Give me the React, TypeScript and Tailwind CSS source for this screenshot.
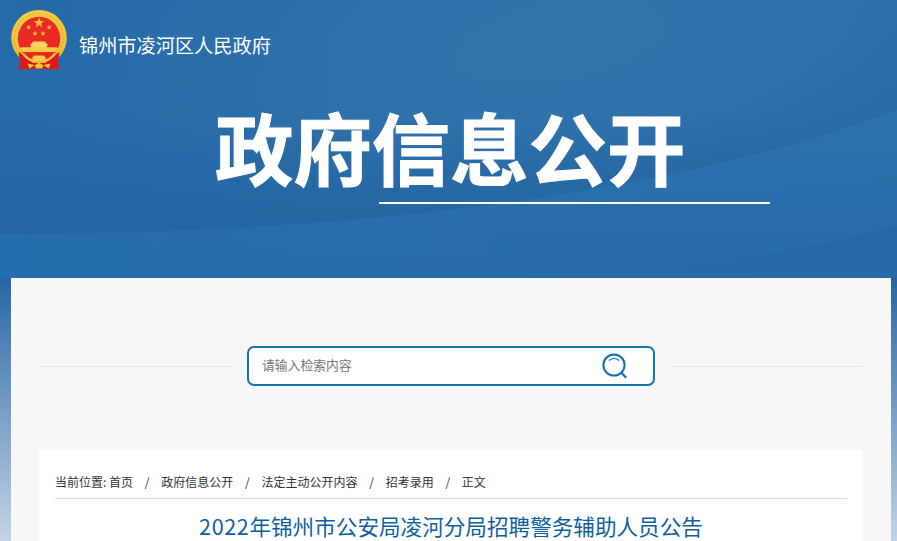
import React from 'react';

const crumbs = ['政府信息公开', '法定主动公开内容', '招考录用', '正文'];

const Emblem: React.FC<{ className?: string }> = ({ className }) => (
  <svg xmlns="http://www.w3.org/2000/svg" viewBox="0 0 56 60" className={className}>
    <defs>
      <linearGradient id="gold" x1="0" y1="0" x2="0" y2="1">
        <stop offset="0" stopColor="#f8cb42" />
        <stop offset="1" stopColor="#eebb35" />
      </linearGradient>
      <polygon id="star" points="0,-10 2.6,-3.24 9.51,-3.09 4,1.4 5.88,8.09 0,4.300 -5.88,8.09 -4,1.4 -9.51,-3.09 -2.6,-3.24" fill="#f5c233" />
    </defs>
    <ellipse cx="28" cy="27.8" rx="27.8" ry="27.8" fill="url(#gold)" />
    <ellipse cx="28" cy="28" rx="24.400" ry="24.800" fill="none" stroke="#dfa42a" strokeWidth="1" strokeDasharray="2 1.6" opacity=".7" />
    <ellipse cx="28" cy="28.5" rx="21.2" ry="21.8" fill="#e92a25" />
    <use href="#star" transform="translate(28 12.800) scale(.54)" />
    <use href="#star" transform="translate(17.6 17.3) scale(.28)" />
    <use href="#star" transform="translate(38.2 17.3) scale(.28)" />
    <use href="#star" transform="translate(24 23.5) scale(.28)" />
    <use href="#star" transform="translate(32 23.5) scale(.28)" />
    <path d="M22 31.5h12l1.2 2.2h1.3v2H36v1.8h9.2l-.8 1.8H11.600l-.8-1.8H20v-1.8h-.5v-2h1.3z" fill="#f9d560" />
    <path d="M8.500 37.500h39l-3 4.800h-33z" fill="#f8ca45" />
    <path d="M10.500 42.300h35L40 48H16z" fill="#e3281f" />
    <path d="M7.500 42c3 1 6 4.500 10 7.500l4 3-4 7.500-3-1.500-7 1.200 1.500-7z" fill="#dc191b" />
    <path d="M48.500 42c-3 1-6 4.500-10 7.500l-4 3 4 7.500 3-1.500 7 1.200-1.500-7z" fill="#dc191b" />
    <path d="M17 53h22l-2 6H19z" fill="#d9161b" />
    <path d="M11.500 43.300c3.500 4.200 7 7.200 11 7.500 2.500 0 3.500-1.300 5.500-1.300s3 1.300 5.500 1.300c4-.3 7.500-3.300 11-7.500" fill="none" stroke="#f6c53b" strokeWidth="2.300" />
    <path d="M23 45.500h10l2 2.500-3.500 3h-7l-3.500-3z" fill="#f8ce4b" />
    <path d="M16.500 53.500l7 1.500-5 3.500zM39.500 53.500l-7 1.500 5 3.500zM28 52.500l4.500 3-1.500 3h-6l-1.500-3z" fill="#f6c53b" />
  </svg>
);

// layered curves behind the banner
const Waves: React.FC<{ className?: string }> = ({ className }) => (
  <svg xmlns="http://www.w3.org/2000/svg" viewBox="0 0 897 278" preserveAspectRatio="none" className={className}>
    <defs>
      <radialGradient id="glow" gradientUnits="userSpaceOnUse" cx="0" cy="0" r="1" gradientTransform="translate(560 40) rotate(-10) scale(590 220)">
        <stop offset="0" stopColor="#3376ae" />
        <stop offset=".5" stopColor="#2e71ab" />
        <stop offset="1" stopColor="#2566a4" />
      </radialGradient>
      <linearGradient id="left" x1="0" y1="0" x2="1" y2="0">
        <stop offset="0" stopColor="#266dab" stopOpacity=".8" />
        <stop offset=".5" stopColor="#2a6fab" stopOpacity="0" />
      </linearGradient>
      <linearGradient id="shade" x1="0" y1="0" x2="0" y2="1">
        <stop offset=".4" stopColor="#2464a2" stopOpacity="0" />
        <stop offset=".85" stopColor="#2464a2" stopOpacity=".9" />
      </linearGradient>
      <linearGradient id="low" x1="0" y1="0" x2="0" y2="1">
        <stop offset="0" stopColor="#2d74af" />
        <stop offset="1" stopColor="#276ca9" />
      </linearGradient>
      <linearGradient id="lowLeft" x1="0" y1="0" x2="1" y2="0">
        <stop offset="0" stopColor="#236eac" />
        <stop offset=".6" stopColor="#266daa" stopOpacity="0" />
      </linearGradient>
      <linearGradient id="corner" x1="0" y1="0" x2="0" y2="1">
        <stop offset="0" stopColor="#2566a4" />
        <stop offset="1" stopColor="#286aa9" />
      </linearGradient>
    </defs>
    <rect width="897" height="278" fill="url(#glow)" />
    <rect width="897" height="278" fill="url(#left)" />
    <rect width="897" height="278" fill="url(#shade)" />
    <path d="M0 234C330 234 660 200 897 110V278H0z" fill="url(#low)" />
    <path d="M0 234C330 234 660 200 897 110V278H0z" fill="url(#lowLeft)" />
    <path d="M490 203C650 203 790 193 897 176V278H490z" fill="#286daa" opacity=".3" />
    <path d="M560 278C700 266 810 250 897 226V278z" fill="url(#corner)" opacity=".7" />
  </svg>
);

const SearchIcon: React.FC<{ className?: string }> = ({ className }) => (
  <svg xmlns="http://www.w3.org/2000/svg" fill="none" viewBox="0 0 28 28" stroke="#0f72aa" className={className}>
    <circle cx="13" cy="13" r="10.6" strokeWidth="2" />
    <path d="M8 8.500q5-4 10.300 0" strokeWidth="1.200" />
    <path d="M20.300 20.700l5 5" strokeWidth="2.300" />
  </svg>
);

export default function App() {
  return (
    <div className="h-[541px] w-[897px] overflow-hidden bg-linear-to-b from-[#2768a7] from-[52%] to-[#c4d4e5] font-['Noto_Sans_CJK_SC',sans-serif]">
      <header className="relative h-[278px] text-white">
        <Waves className="absolute inset-0 h-full w-full" />
        <div className="relative flex h-[72px] items-start pt-[10px] pl-[11px]">
          <Emblem className="h-[60px] w-14" />
          <span className="mt-[21px] ml-3 text-[19.2px] leading-7 whitespace-nowrap">锦州市凌河区人民政府</span>
        </div>
        <h1 className="relative mt-7 ml-[215px] text-[78.4px] leading-[92px] font-bold whitespace-nowrap [-webkit-text-stroke:1px_white]">
          政府信息公开
        </h1>
        <div className="relative mt-[10px] ml-[379px] h-0.5 w-[391px] bg-white" />
      </header>

      <main className="ml-[11px] h-[263px] w-[880px] bg-[#f7f7f7] px-7 pt-[68px]">
        <div className="flex w-[823px] items-center">
          <div className="mr-4 h-px w-48 bg-[#e4e4e4]" />
          <div className="mr-4 flex h-10 w-[408px] items-center rounded-[7px] border-2 border-[#1277ae] bg-white pr-6 pl-[13px]">
            <input
              type="text"
              placeholder="请输入检索内容"
              className="mb-0.5 min-w-0 flex-1 text-[12.8px] outline-none placeholder:text-[#757575]"
            />
            <SearchIcon className="size-7" />
          </div>
          <div className="h-px flex-1 bg-[#e4e4e4]" />
        </div>

        <article className="mt-16 h-[91px] w-[824px] bg-white px-4 pt-[22px]">
          <nav className="flex h-[27px] items-start border-b border-[#ddd] text-xs leading-5 whitespace-nowrap text-[#333]">
            <span>当前位置:&nbsp;首页</span>
            {crumbs.map((crumb) => (
              <React.Fragment key={crumb}>
                <span className="w-[28.2px] text-center">/</span>
                <span>{crumb}</span>
              </React.Fragment>
            ))}
          </nav>
          <h2 className="mt-[11px] text-center text-[21.6px] leading-8 whitespace-nowrap text-[#0f5f9f]">
            <span className="tracking-[0.6px]">2022</span>年锦州市公安局凌河分局招聘警务辅助人员公告
          </h2>
        </article>
      </main>
    </div>
  );
}
